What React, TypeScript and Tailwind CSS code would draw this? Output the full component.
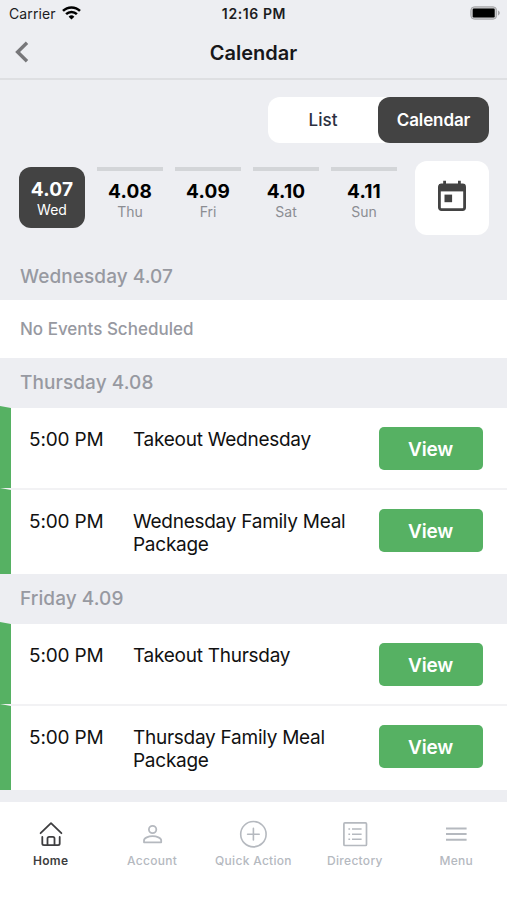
import React from "react";

type EventType = { time: string; title: string };

const days = [
	{ date: "4.07", day: "Wed" },
	{ date: "4.08", day: "Thu" },
	{ date: "4.09", day: "Fri" },
	{ date: "4.10", day: "Sat" },
	{ date: "4.11", day: "Sun" },
];

const thursday: EventType[] = [
	{ time: "5:00 PM", title: "Takeout Wednesday" },
	{ time: "5:00 PM", title: "Wednesday Family Meal Package" },
];

const friday: EventType[] = [
	{ time: "5:00 PM", title: "Takeout Thursday" },
	{ time: "5:00 PM", title: "Thursday Family Meal Package" },
];

const StatusBar = () => (
	<div className="h-7 pb-px grid grid-cols-3 items-center pl-[9px] pr-[7px] text-[14px] text-[#1c1c1e]">
		<div className="flex items-center gap-[6px]">
			<span className="tracking-[0.1px]">Carrier</span>
			<svg className="-mt-px" width="19" height="14" viewBox="0 0 19 14" fill="none" stroke="#000" strokeWidth="2.5">
				<path d="M1 4.9a12.1 12.1 0 0 1 17 0" />
				<path d="M4.1 8.2a7.6 7.6 0 0 1 10.8 0" />
				<path d="M6.6 10.7a4.1 4.1 0 0 1 5.8 0L9.5 13.6z" fill="#000" stroke="none" />
			</svg>
		</div>
		<p className="-ml-[1px] text-center font-semibold tracking-[0.6px] whitespace-nowrap">12:16 PM</p>
		<svg className="justify-self-end -mt-px" width="30" height="14" viewBox="0 0 30 14">
			<rect x="0.8" y="0.8" width="25.8" height="12.4" rx="3.6" fill="#c9c9cb" stroke="#a5a5a8" strokeWidth="1" />
			<rect x="2.7" y="2.6" width="22" height="8.8" rx="1.2" fill="#000" />
			<path d="M28 4.6c2.4 1 2.4 3.8 0 4.8z" fill="#a5a5a8" />
		</svg>
	</div>
);

const SectionTitle = ({ title }: { title: string }) => (
	<h2 className="h-12 pt-[2px] pl-5 flex items-center text-[19px] tracking-[0.08px] font-medium text-[#9799a1]">
		{title}
	</h2>
);

const EventRow = ({ event, first }: { event: EventType; first: boolean }) => {
	const { time, title } = event;
	return (
		<div
			className={`flex items-start bg-white border-t-2 border-l-[11px] border-l-[#56b163] pt-[19px] pr-[24.5px] text-[19px] leading-[23px] text-[#111] ${
				first ? "h-[82px] border-t-[#edeef2]" : "h-[86px] border-t-[#f2f2f4]"
			}`}
		>
			<p className="w-[104px] pt-px pl-[18px] shrink-0 tracking-[-0.15px] whitespace-nowrap">{time}</p>
			<p className="flex-1 pt-px pl-[18px] pr-5 tracking-[-0.26px]">{title}</p>
			<button className="w-[104px] h-[43px] pt-px shrink-0 rounded-[5px] bg-[#56b163] text-white text-[19px] tracking-[-0.2px] font-semibold">
				View
			</button>
		</div>
	);
};

const HomeIcon = () => (
	<svg width="28" height="28" viewBox="0 0 28 28" fill="none" stroke="#3e3e40" strokeWidth="1.8" strokeLinecap="round" strokeLinejoin="round">
		<path d="M3.6 13.2 14 3.2l10.4 10" />
		<path d="M5.3 17v6.6c0 1 .6 1.6 1.6 1.6h14.2c1 0 1.6-.6 1.6-1.6V17" />
		<path d="M10.5 25.2v-6.8c0-1 .6-1.6 1.6-1.6h3.8c1 0 1.6.6 1.6 1.6v6.8" />
	</svg>
);

const AccountIcon = () => (
	<svg width="28" height="28" viewBox="0 0 28 28" fill="none" stroke="#b5b9bf" strokeWidth="1.8">
		<circle cx="14.6" cy="9.5" r="3.7" />
		<path d="M6 22.3v-1.9c0-2.6 4.6-4.2 8.6-4.2s8.6 1.6 8.6 4.2v1.9z" strokeLinejoin="round" />
	</svg>
);

const QuickActionIcon = () => (
	<svg width="28" height="28" viewBox="0 0 28 28" fill="none" stroke="#b5b9bf" strokeWidth="1.6" strokeLinecap="round">
		<circle cx="14.4" cy="14.2" r="12.7" />
		<path d="M14.4 8.4V20M8.6 14.2h11.6" />
	</svg>
);

const DirectoryIcon = () => (
	<svg width="28" height="28" viewBox="0 0 28 28" fill="none" stroke="#b5b9bf" strokeWidth="1.5">
		<rect x="2.9" y="2.9" width="22.6" height="22.6" rx="1" strokeWidth="1.7" />
		<path d="M11 9.1h9.6M11 14.2h9.6M11 19.3h9.6M7.4 9.1h1.7M7.4 14.2h1.7M7.4 19.3h1.7" />
	</svg>
);

const MenuIcon = () => (
	<svg width="28" height="28" viewBox="0 0 28 28" fill="none" stroke="#b5b9bf" strokeWidth="2">
		<path d="M4 8.4h20.6M4 14.1h20.6M4 19.8h20.6" />
	</svg>
);

const tabs = [
	{ label: "Home", icon: <HomeIcon /> },
	{ label: "Account", icon: <AccountIcon /> },
	{ label: "Quick Action", icon: <QuickActionIcon /> },
	{ label: "Directory", icon: <DirectoryIcon /> },
	{ label: "Menu", icon: <MenuIcon /> },
];

const App = () => {
	return (
		<div className="w-[507px] h-[900px] overflow-hidden flex flex-col bg-[#edeef2] font-['Inter',sans-serif]">
			<header className="h-20 shrink-0 border-b-2 border-[#dedfe2]">
				<StatusBar />
				<div className="h-12 grid grid-cols-3 items-center">
					<svg className="ml-[14px]" width="16" height="24" viewBox="0 0 16 24" fill="none" stroke="#77777a" strokeWidth="3.4">
						<path d="M13 2.8 3.6 12 13 21.2" />
					</svg>
					<h1 className="pt-px text-center text-[20px] font-semibold text-[#17171a]">Calendar</h1>
				</div>
			</header>

			<div className="h-[172px] shrink-0 pt-[17px]">
				<div className="ml-[268px] w-[221px] h-[46px] flex rounded-xl bg-white text-[17px]">
					<button className="flex-1 pt-[2px] font-medium text-[#2b3040]">List</button>
					<button className="w-[111px] pt-[2px] rounded-xl bg-[#434343] text-white tracking-[-0.1px] font-semibold">
						Calendar
					</button>
				</div>
				<div className="mt-[17.5px] pl-[19px] flex items-start">
					<div className="flex gap-3 pt-[6.5px]">
						{days.map(({ date, day }, i) => (
							<div
								key={date}
								className={
									i === 0
										? "w-[66px] h-[61px] pt-[11px] rounded-xl bg-[#434343] text-white text-center"
										: "w-[66px] h-[61px] pt-[9px] border-t-4 border-[#d3d5d8] text-center text-black"
								}
							>
								<p className="text-[19px] leading-[23px] tracking-[0.2px] font-bold">{date}</p>
								<p className={`text-[14px] leading-[18px] ${i === 0 ? "" : "text-[#8b8d92]"}`}>{day}</p>
							</div>
						))}
					</div>
					<button className="ml-[18px] w-[74px] h-[74px] rounded-xl bg-white flex items-center justify-center">
						<svg className="-mt-[3px]" width="30" height="32" viewBox="0 0 30 32" fill="none">
							<path d="M7.6 .8v4M22.4 .8v4" stroke="#434343" strokeWidth="2.8" />
							<rect x="2.4" y="5" width="25.2" height="24.6" rx="2" stroke="#434343" strokeWidth="2.8" />
							<path d="M2 4h26v7.4H2z" fill="#434343" />
							<path d="M7.5 14.6h7.6v7.6H7.5z" fill="#434343" />
						</svg>
					</button>
				</div>
			</div>

			<main className="flex-1 min-h-0">
				<SectionTitle title="Wednesday 4.07" />
				<p className="h-[58px] pt-[2px] pl-5 flex items-center bg-white text-[17px] font-medium text-[#9799a1]">
					No Events Scheduled
				</p>
				<SectionTitle title="Thursday 4.08" />
				{thursday.map((event, i) => (
					<EventRow key={event.title} event={event} first={i === 0} />
				))}
				<SectionTitle title="Friday 4.09" />
				{friday.map((event, i) => (
					<EventRow key={event.title} event={event} first={i === 0} />
				))}
			</main>

			<nav className="h-[98px] shrink-0 pt-[18px] grid grid-cols-5 bg-white">
				{tabs.map(({ label, icon }, i) => (
					<div key={label} className="flex flex-col items-center gap-1">
						{icon}
						<p
							className={`text-[12px] leading-[18px] tracking-[0.3px] whitespace-nowrap ${
								i === 0 ? "font-semibold text-[#3e3e40]" : "font-medium text-[#b5b9bf]"
							}`}
						>
							{label}
						</p>
					</div>
				))}
			</nav>
		</div>
	);
};

export default App;
